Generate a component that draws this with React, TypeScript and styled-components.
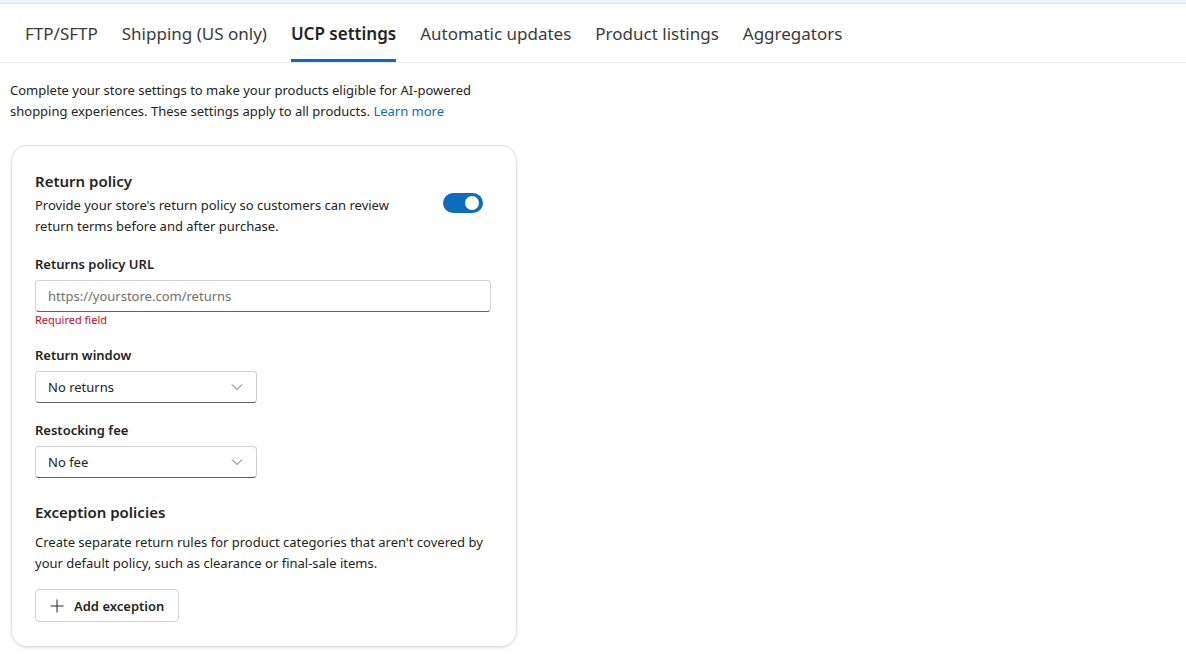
import styled, { createGlobalStyle } from 'styled-components'

const GlobalStyle = createGlobalStyle`
  html, body {
    margin: 0;
    padding: 0;
    background: #fff;
  }
  body {
    font-family: 'Noto Sans', 'Open Sans', sans-serif;
    color: #242424;
  }
  * { box-sizing: border-box; }
`

const tabs = ['FTP/SFTP', 'Shipping (US only)', 'UCP settings', 'Automatic updates', 'Product listings', 'Aggregators']

function Chevron() {
  return (
    <svg width="14" height="14" viewBox="0 0 14 14" fill="none">
      <path d="M2 4.5 L7 9.5 L12 4.5" stroke="#616161" strokeWidth="1" />
    </svg>
  )
}

function Plus() {
  return (
    <svg width="16" height="16" viewBox="0 0 16 16" fill="none">
      <path d="M8 1.5 V14.5 M1.5 8 H14.5" stroke="#242424" strokeWidth="1" />
    </svg>
  )
}

function App() {
  return (
    <Page>
      <GlobalStyle />
      <TopStrip />
      <TabBar>
        {tabs.map((t) => (
          <Tab key={t} $active={t === 'UCP settings'}>{t}</Tab>
        ))}
      </TabBar>
      <Content>
        <Intro>
          Complete your store settings to make your products eligible for AI-powered
          shopping experiences. These settings apply to all products. <Link>Learn more</Link>
        </Intro>
        <Card>
          <HeaderRow>
            <div>
              <SectionTitle>Return policy</SectionTitle>
              <Text $top={3}>
                Provide your store's return policy so customers can review
                <br />
                return terms before and after purchase.
              </Text>
            </div>
            <Toggle>
              <Knob />
            </Toggle>
          </HeaderRow>

          <Field $top={17}>
            <Label>Returns policy URL</Label>
            <Input placeholder="https://yourstore.com/returns" />
            <ErrorText>Required field</ErrorText>
          </Field>

          <Field $top={17}>
            <Label>Return window</Label>
            <Select>
              <span>No returns</span>
              <Chevron />
            </Select>
          </Field>

          <Field $top={17}>
            <Label>Restocking fee</Label>
            <Select>
              <span>No fee</span>
              <Chevron />
            </Select>
          </Field>

          <Exception>
            <SectionTitle>Exception policies</SectionTitle>
            <Text $top={9}>
              Create separate return rules for product categories that aren't covered by
              your default policy, such as clearance or final-sale items.
            </Text>
            <Button>
              <Plus />
              Add exception
            </Button>
          </Exception>
        </Card>
      </Content>
    </Page>
  )
}

const Page = styled.div`
  width: 1186px;
  min-height: 660px;
`

const TopStrip = styled.div`
  height: 4px;
  background: #ebf3fc;
  border-bottom: 1px solid #e3e3e3;
`

const TabBar = styled.div`
  display: flex;
  gap: 24px;
  padding: 0 0 0 25px;
  height: 59px;
  border-bottom: 1px solid #ececec;
`

const Tab = styled.div<{ $active?: boolean }>`
  display: flex;
  align-items: center;
  position: relative;
  font-size: 17px;
  font-weight: ${(p) => (p.$active ? 600 : 400)};
  color: ${(p) => (p.$active ? '#242424' : '#3a3a3a')};
  &::after {
    content: '';
    display: ${(p) => (p.$active ? 'block' : 'none')};
    position: absolute;
    left: 0;
    right: 0;
    bottom: 0;
    height: 3px;
    background: #0f6cbd;
  }
`

const Content = styled.div`
  padding: 17px 10px 16px;
`

const Intro = styled.p`
  margin: 0;
  width: 490px;
  font-size: 13px;
  line-height: 21px;
  color: #242424;
`

const Link = styled.a`
  color: #0f6cbd;
  cursor: pointer;
`

const Card = styled.div`
  width: 506px;
  margin: 23px 0 0 1px;
  padding: 24px 24px 24px 23px;
  border: 1px solid #e0e0e0;
  border-radius: 16px;
  box-shadow: 0 1px 3px rgba(0, 0, 0, 0.12);
`

const HeaderRow = styled.div`
  display: flex;
  justify-content: space-between;
  align-items: flex-start;
`

const SectionTitle = styled.div`
  font-size: 15px;
  font-weight: 600;
  line-height: 22px;
`

const Text = styled.p<{ $top?: number }>`
  margin: ${(p) => p.$top ?? 0}px 0 0;
  font-size: 13px;
  line-height: 21px;
  color: #242424;
`

const Toggle = styled.div`
  width: 40px;
  height: 20px;
  margin: 23px 9px 0 0;
  border-radius: 10px;
  background: #0f6cbd;
  display: flex;
  align-items: center;
  justify-content: flex-end;
  padding-right: 4px;
`

const Knob = styled.div`
  width: 14px;
  height: 14px;
  border-radius: 50%;
  background: #fff;
`

const Field = styled.div<{ $top: number }>`
  margin-top: ${(p) => p.$top}px;
  display: flex;
  flex-direction: column;
`

const Label = styled.label`
  font-size: 13px;
  font-weight: 600;
  line-height: 20px;
  margin-bottom: 6px;
`

const Input = styled.input`
  width: 456px;
  height: 32px;
  padding: 0 12px;
  font: inherit;
  font-size: 13px;
  border: 1px solid #d1d1d1;
  border-bottom-color: #616161;
  border-radius: 4px;
  outline: none;
  &::placeholder { color: #707070; }
`

const ErrorText = styled.div`
  font-size: 11px;
  line-height: 16px;
  color: #c50f1f;
`

const Select = styled.div`
  width: 222px;
  height: 32px;
  padding: 0 12px;
  display: flex;
  align-items: center;
  justify-content: space-between;
  font-size: 13px;
  border: 1px solid #d1d1d1;
  border-bottom-color: #616161;
  border-radius: 4px;
`

const Exception = styled.div`
  margin-top: 23px;
`

const Button = styled.button`
  margin-top: 15px;
  height: 33px;
  padding: 0 14px 0 13px;
  display: inline-flex;
  align-items: center;
  gap: 9px;
  font-family: inherit;
  font-size: 13px;
  font-weight: 600;
  color: #242424;
  background: #fff;
  border: 1px solid #d1d1d1;
  border-radius: 4px;
`

export default App
